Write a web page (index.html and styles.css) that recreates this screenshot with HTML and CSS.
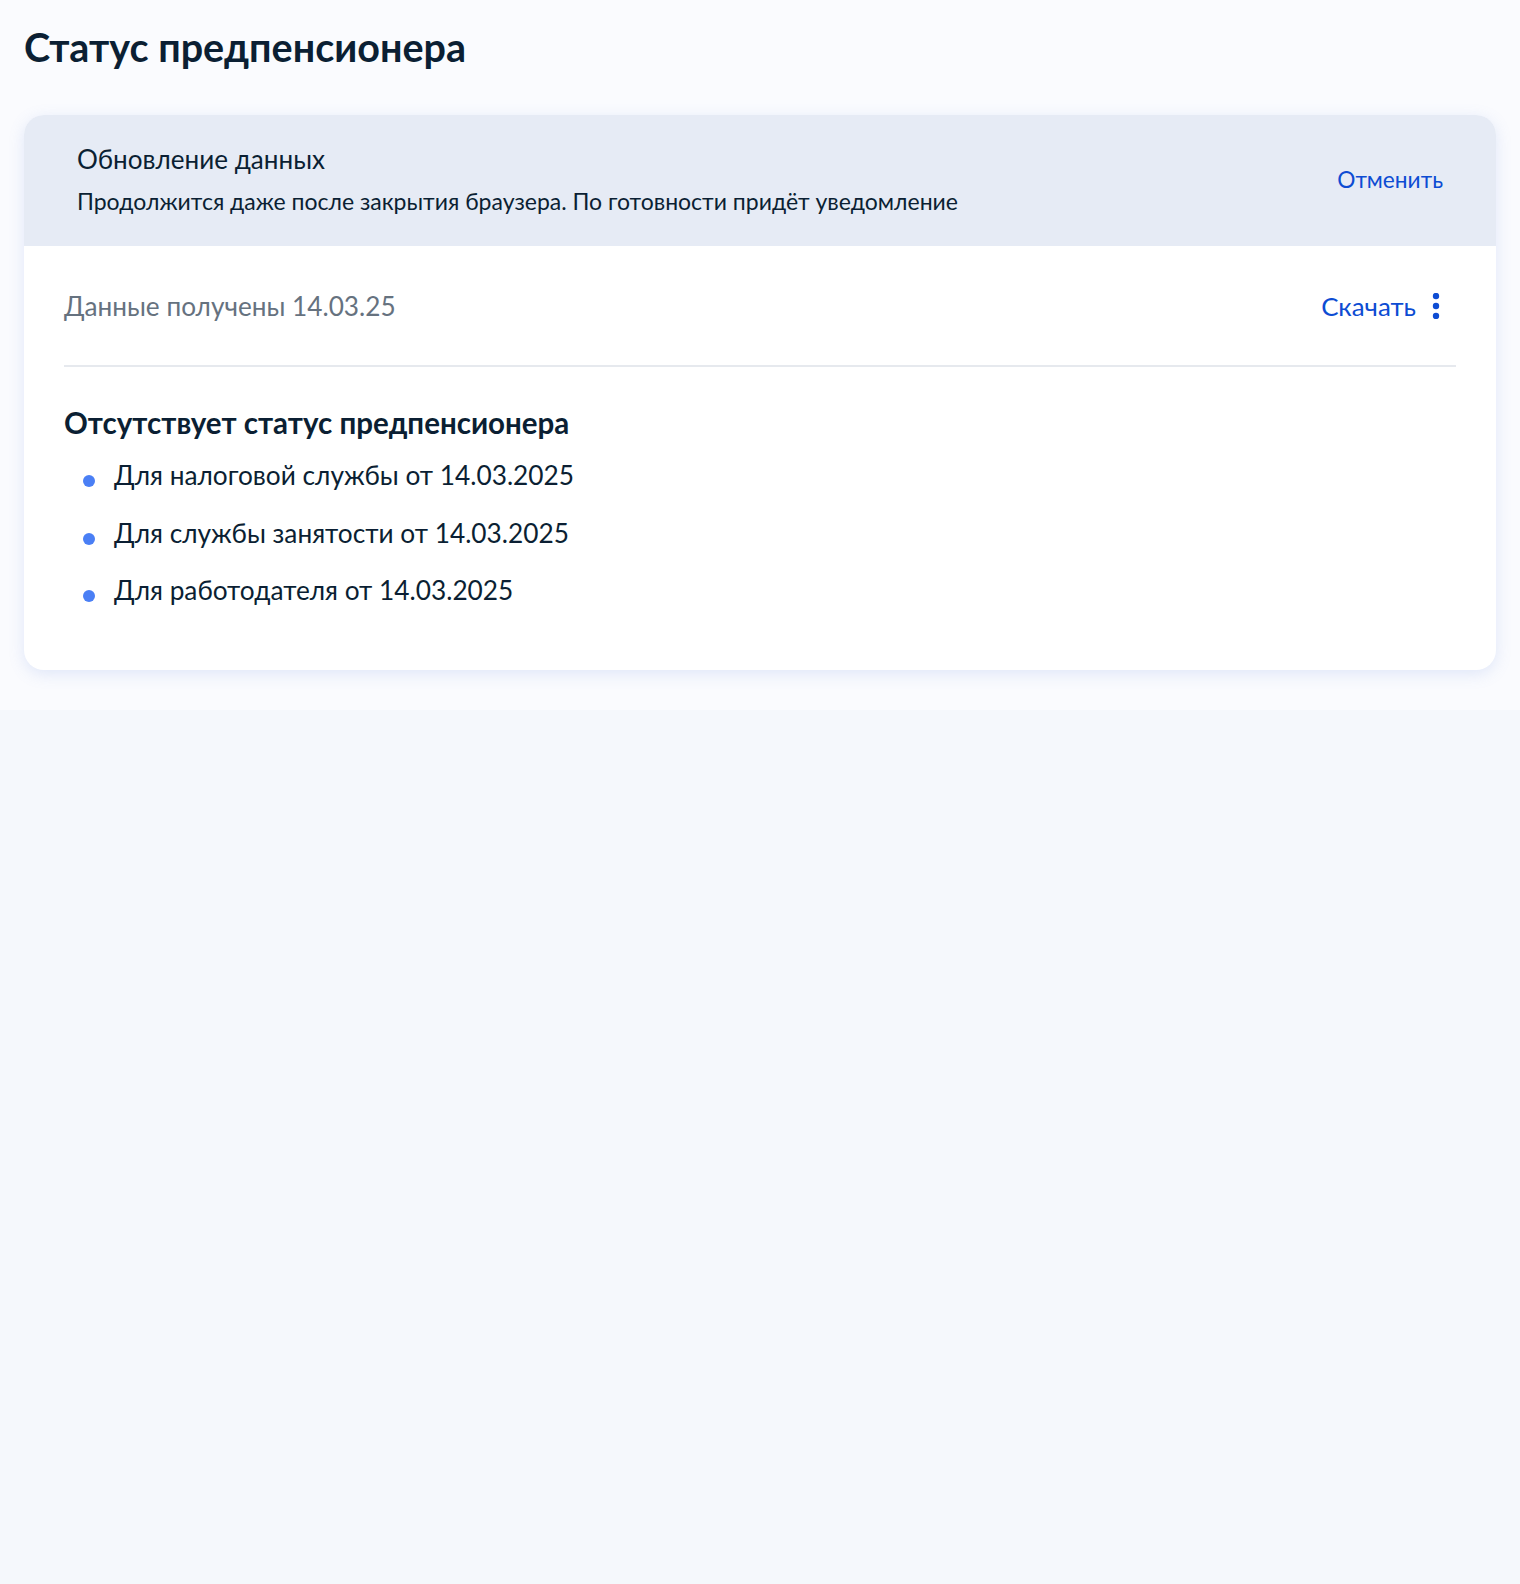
FILE: index.html
```html
<!DOCTYPE html>
<html lang="ru">
<head>
<meta charset="utf-8">
<title>Статус предпенсионера</title>
<link rel="stylesheet" href="styles.css">
</head>
<body>
<main class="page">
  <h1 class="page-title">Статус предпенсионера</h1>
  <section class="card">
    <div class="banner">
      <div class="banner-text">
        <div class="banner-title">Обновление данных</div>
        <div class="banner-desc">Продолжится даже после закрытия браузера. По готовности придёт уведомление</div>
      </div>
      <a class="link banner-cancel">Отменить</a>
    </div>
    <div class="card-body">
      <div class="meta-row">
        <span class="meta-date">Данные получены 14.03.25</span>
        <div class="meta-actions">
          <a class="link download">Скачать</a>
          <svg class="kebab" width="8" height="26" viewBox="0 0 8 26" aria-hidden="true">
            <circle cx="4" cy="3" r="3.2" fill="#0d4cd3"/>
            <circle cx="4" cy="13" r="3.2" fill="#0d4cd3"/>
            <circle cx="4" cy="23" r="3.2" fill="#0d4cd3"/>
          </svg>
        </div>
      </div>
      <div class="divider"></div>
      <h2 class="status-title">Отсутствует статус предпенсионера</h2>
      <ul class="status-list">
        <li>Для налоговой службы от 14.03.2025</li>
        <li>Для службы занятости от 14.03.2025</li>
        <li>Для работодателя от 14.03.2025</li>
      </ul>
    </div>
  </section>
</main>
</body>
</html>
```
FILE: styles.css
```css
* { box-sizing: border-box; }
html, body { margin: 0; padding: 0; }
body {
  background: #f5f8fc;
  font-family: Lato, "Noto Sans", sans-serif;
  color: #0b1f33;
  min-height: 1584px;
}
.page {
  background: #fafbfe;
  padding: 23px 24px 40px;
}
.page-title {
  margin: 0 0 44px;
  font-size: 39.5px;
  line-height: 48px;
  font-weight: 700;
}
.card {
  background: #fff;
  border-radius: 20px;
  overflow: hidden;
  box-shadow: 0 4px 16px rgba(105, 140, 220, 0.18);
}
.banner {
  background: #e6ebf5;
  display: flex;
  align-items: center;
  justify-content: space-between;
  padding: 28px 53px 30px 53px;
}
.banner-title { font-size: 26.1px; line-height: 32px; }
.banner-desc { font-size: 23px; line-height: 30px; margin-top: 11px; }
.link { color: #0d4cd3; text-decoration: none; cursor: pointer; }
.banner-cancel { font-size: 22.7px; }
.card-body { padding: 42px 40px 50px; }
.meta-row { display: flex; align-items: center; justify-content: space-between; height: 36px; }
.meta-date { color: #66727f; font-size: 26.2px; }
.meta-actions { display: flex; align-items: center; gap: 16px; padding-right: 16px; }
.download { font-size: 25.9px; }
.divider { height: 2px; background: #e6e9ee; margin-top: 41px; }
.status-title { margin: 38px 0 0; font-size: 29.5px; font-weight: 700; line-height: 36px; }
.status-list { list-style: none; margin: 6px 0 0; padding: 0 0 0 18px; }
.status-list li { position: relative; padding-left: 32px; font-size: 26.25px; line-height: 57.5px; }
.status-list li::before {
  content: ""; position: absolute; left: 1px; top: 28px;
  width: 12px; height: 12px; border-radius: 50%; background: #4a7ff5;
}
```
